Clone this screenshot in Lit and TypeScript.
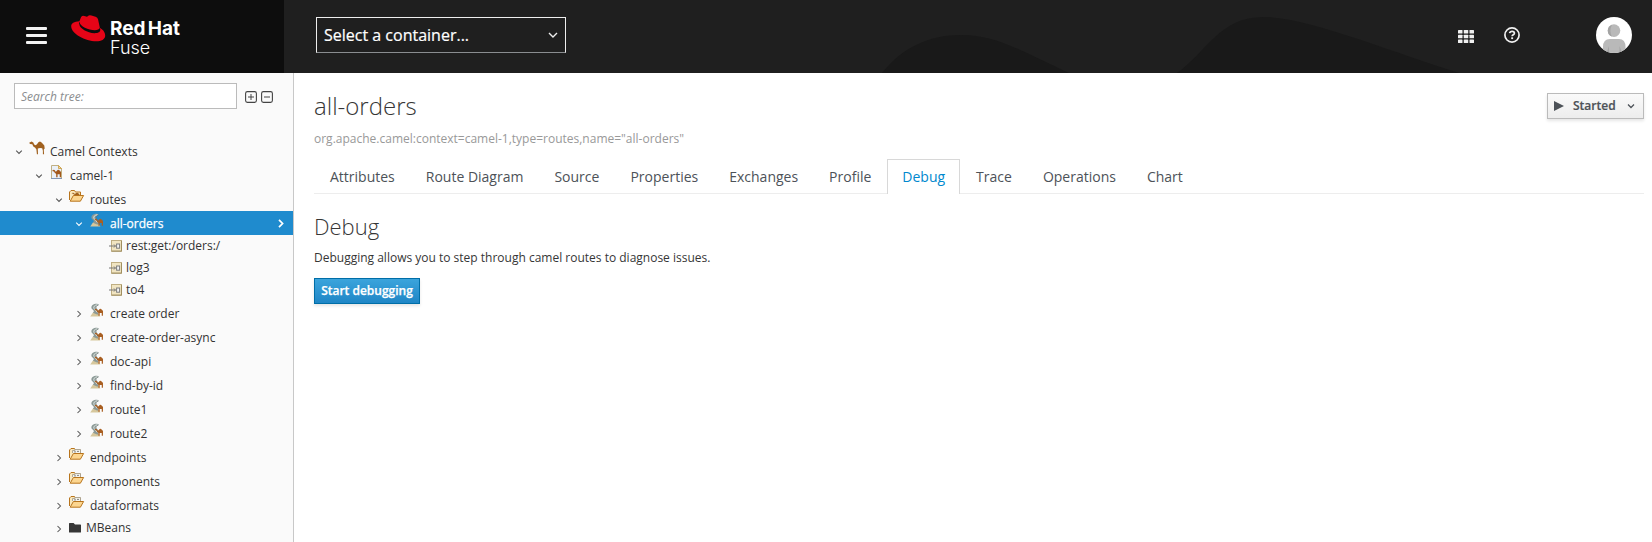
import { LitElement, html, css, svg } from "lit";
import { customElement, property } from "lit/decorators.js";

type IconName = "camel" | "context" | "folder" | "files" | "route" | "node" | "dir";

interface TreeItem {
  label: string;
  level: number;
  icon: IconName;
  state: "open" | "closed" | "leaf";
  selected?: boolean;
}

const TREE: TreeItem[] = [
  { label: "Camel Contexts", level: 0, icon: "camel", state: "open" },
  { label: "camel-1", level: 1, icon: "context", state: "open" },
  { label: "routes", level: 2, icon: "folder", state: "open" },
  { label: "all-orders", level: 3, icon: "route", state: "open", selected: true },
  { label: "rest:get:/orders:/", level: 4, icon: "node", state: "leaf" },
  { label: "log3", level: 4, icon: "node", state: "leaf" },
  { label: "to4", level: 4, icon: "node", state: "leaf" },
  { label: "create order", level: 3, icon: "route", state: "closed" },
  { label: "create-order-async", level: 3, icon: "route", state: "closed" },
  { label: "doc-api", level: 3, icon: "route", state: "closed" },
  { label: "find-by-id", level: 3, icon: "route", state: "closed" },
  { label: "route1", level: 3, icon: "route", state: "closed" },
  { label: "route2", level: 3, icon: "route", state: "closed" },
  { label: "endpoints", level: 2, icon: "files", state: "closed" },
  { label: "components", level: 2, icon: "files", state: "closed" },
  { label: "dataformats", level: 2, icon: "files", state: "closed" },
  { label: "MBeans", level: 2, icon: "dir", state: "closed" },
];

const TABS = ["Attributes", "Route Diagram", "Source", "Properties", "Exchanges", "Profile", "Debug", "Trace", "Operations", "Chart"];

const camelShape = svg`<path d="M.2 1.7 2.6 .6 4.3 1.5 5.2 3.6 6.6 4.2 8 3.2 9.4 1.2 11 .5 12.6 1.4 14 3 15.3 4.6 15.8 8.2 15 7.6 14.8 9.6 15.1 13.2H13.9L13.9 9.8 13.2 7.2 11 7 8.8 7.4 9 13.2H7.9L7.4 8.4 6.2 6.8 4.3 5.4 3.3 3.2 1 3Z"/>`;
const camelMini = svg`<path d="M.2 1.6 3 .6 4.6 1.6 5.6 3.8 7 3.8 9.4 1.2 11.4 .8 14 3 15.6 5 15.4 13.6H13.2V8.4H9.4V13.6H7V8.2L4.4 6 3.2 3.6 .8 3.4Z"/>`;

const ICONS: Record<IconName, unknown> = {
  camel: svg`<g fill="#a0611f">${camelShape}</g>`,
  context: svg`
    <path d="M2.5 .5H9.5L12.5 3.5V13.5H2.5Z" fill="#eaf0f8" stroke="#c0b084"/>
    <path d="M9.5 .5V3.5H12.5Z" fill="#f5dca0" stroke="#c99b3c" stroke-width=".8"/>
    <path d="M2 13.5H13" stroke="#8496b4"/>
    <g fill="#a3571a" transform="translate(3.2 4.4) scale(.57)">${camelMini}</g>`,
  folder: svg`
    <path d="M.5 11V3L2 1.5H5.5L6.5 3H11.5V6" fill="#fbe9bd" stroke="#b8741c"/>
    <g fill="#a0611f" transform="translate(2.6 3.6) scale(.5 .3)">${camelMini}</g>
    <path d="M1.2 12.2 4.4 6.5H14.6L11.4 12.2Z" fill="#fcd690" stroke="#b8741c" stroke-linejoin="round"/>`,
  files: svg`
    <path d="M.5 11V3L2 1.5H5.5L6.5 3H11.5V6" fill="#fbe9bd" stroke="#b8741c"/>
    <path d="M3.5 6V3.5H6V2.5H11.5V6" fill="#f3f3ec" stroke="#a9a290" stroke-width=".9"/>
    <path d="M5 4.9H7M8 4.4H10" stroke="#777" stroke-width=".9"/>
    <path d="M1.2 12.2 4.4 6.5H14.6L11.4 12.2Z" fill="#fcd690" stroke="#b8741c" stroke-linejoin="round"/>`,
  route: svg`
    <path d="M1.2 13.6 4 9.6 6 8.6 9 10 11.4 13.6Z" fill="#d6c79c"/>
    <path d="M8.6 .9C4.6 .6 1.6 2.8 2.6 5.4L5 8 4 9.8 8.6 11.8 9.8 9.6 7 5.8C6 4 7 2.8 9.8 1.8Z" fill="#8b9996"/>
    <path d="M8.4 1.7C5.6 2.2 4.2 3.6 5 5.4L8.2 9.4" fill="none" stroke="#dfe5e1" stroke-width="1"/>
    <path d="M9.6 1.9C7.4 2.8 6.4 4.2 7.4 5.8L9.2 8" fill="none" stroke="#65716f" stroke-width=".7"/>
    <g fill="#a95f22" transform="translate(5.6 5.4) scale(.54)">${camelMini}</g>`,
  node: svg`
    <rect x="2.5" y="2.5" width="10" height="10.6" fill="#f1e5c2" stroke="#bfae82"/>
    <path d="M2.5 13.2H12.5V3" fill="none" stroke="#a08f60"/>
    <path d="M0 8H6.4M5 6.5 6.5 8 5 9.5" fill="none" stroke="#767676"/>
    <rect x="7.6" y="6" width="3" height="4.2" fill="#f3f3f3" stroke="#7e7e7e"/>`,
  dir: svg`<path d="M0 3.6Q0 3 .6 3H4.6L6 4.6H11.4Q12 4.6 12 5.2V11.9Q12 12.5 11.4 12.5H.6Q0 12.5 0 11.9Z" fill="#363636"/>`,
};

const chevron = (open: boolean) => html`<svg width="8" height="8" viewBox="0 0 8 8">
  <path d=${open ? "M1.2 2.6 4 5.4 6.8 2.6" : "M2.5 1 5.5 4 2.5 7"} fill="none" stroke="currentColor" stroke-width="1.05"/></svg>`;

@customElement("fuse-header")
class FuseHeader extends LitElement {
  static styles = css`
    :host { display: flex; height: 73px; background: #1f1f1f; position: relative; color: #fff; }
    .brand { width: 284px; box-sizing: border-box; background: #0d0d0d; display: flex; padding-left: 26px; position: relative; }
    .burger { display: flex; flex-direction: column; gap: 4px; padding-top: 27px; width: 45px; }
    .burger i { width: 21px; height: 3px; border-radius: 1px; background: #f2f2f2; }
    .hat { margin-top: 14px; }
    .name { font-family: "Inter", sans-serif; margin: 19px 0 0 4px; display: flex; flex-direction: column; }
    .red { font-size: 19px; line-height: 19px; font-weight: 700; letter-spacing: 0; word-spacing: -2.2px; white-space: nowrap; }
    .fuse { font-size: 18px; line-height: 19px; font-weight: 300; }
    .waves { position: absolute; left: 850px; top: 0; }
    .select { position: relative; box-sizing: border-box; margin: 17px 0 0 32px; width: 250px; height: 36px; border: 1px solid #ededed; border-bottom-color: #8a8d90; display: flex; align-items: center; justify-content: space-between; padding: 0 7px 0 7px; font-size: 16px; line-height: 24px; -webkit-text-stroke: .2px #fff; }
    .tools { position: relative; margin-left: auto; display: flex; align-items: flex-start; padding-right: 20px; }
    .grid { margin: 30px 30px 0 0; }
    .help { margin: 27px 76px 0 0; }
    .avatar { margin-top: 17px; }
  `;
  render() {
    return html`
      <svg class="waves" width="640" height="73" viewBox="0 0 640 73" fill="#191919">
        <path d="M32 73C52 48 78 35 111 35C148 35 175 53 219 73Z"/>
        <path d="M327 73C357 52 369 17 414 17C458 17 550 55 609 73Z"/>
      </svg>
      <div class="brand">
        <div class="burger"><i></i><i></i><i></i></div>
        <svg class="hat" width="35" height="29" viewBox="0 0 35 29">
          <path d="M8.4 7.2 9.9 3.4Q10.7 1 13.3 1.9L16 2.8 17.7 1.6Q18.6 1 20.4 1.5L24.6 2.7Q26.6 3.3 27.1 5.4L28.9 14C31.5 15.2 34.2 18 34.2 21.4 34.2 25.4 30.2 27.3 25.3 27.3 14.2 27.3.2 19.8.2 12.3.2 9.2 3 7.4 8.4 7.2Z" fill="#e60417"/>
          <path d="M8.4 10.6C8.7 14.3 16.2 19.2 23.6 19.2 27 19.2 29.3 18.2 29.3 15.8L28.8 13.8C28.5 15.5 26.4 16.2 23.8 16.2 17.5 16.2 8.7 12.4 8.4 7.8L7.9 9.1Z" fill="#0d0d0d"/>
        </svg>
        <div class="name"><span class="red">Red Hat</span><span class="fuse">Fuse</span></div>
      </div>
      <div class="select"><span>Select a container...</span>
        <svg width="10" height="8" viewBox="0 0 10 8"><path d="M1 2 5 6 9 2" fill="none" stroke="#ededed" stroke-width="1.4"/></svg>
      </div>
      <div class="tools">
        <svg class="grid" width="16" height="14" viewBox="0 0 16 14" fill="#f0f0f0">
          ${[0, 4.7, 9.4].map((y) => [0, 5.75, 11.5].map((x) => svg`<rect x=${x} y=${y} width="4.5" height="3.6" rx=".6"/>`))}
        </svg>
        <svg class="help" width="16" height="16" viewBox="0 0 16 16" fill="none" stroke="#f0f0f0">
          <circle cx="8" cy="8" r="7.1" stroke-width="1.7"/>
          <path d="M5.6 6.2C5.9 4.7 7 4.3 8.1 4.3 9.4 4.3 10.4 5.1 10.4 6.2 10.4 7.8 8.1 7.7 8.1 9.3" stroke-width="1.7"/>
          <path d="M7.2 11.2H9.1" stroke-width="1.8"/>
        </svg>
        <svg class="avatar" width="36" height="36" viewBox="0 0 36 36">
          <clipPath id="round"><circle cx="18" cy="18" r="18"/></clipPath>
          <g clip-path="url(#round)">
            <rect width="36" height="36" fill="#fff"/>
            <path d="M7 36V30Q7 22 14 22H23Q29.5 22 29.5 30V36Z" fill="#b9b9b9"/>
            <path d="M10.5 36 13 29V36ZM26 36 23.5 29V36Z" fill="#a3a3a3"/>
            <circle cx="18" cy="13.6" r="6.3" fill="#b9b9b9"/>
            <path d="M16 7.7A6.3 6.3 0 0 0 16 19.6Q12.8 14 16 7.7Z" fill="#a3a3a3"/>
          </g>
        </svg>
      </div>`;
  }
}

@customElement("jmx-tree")
class JmxTree extends LitElement {
  static styles = css`
    :host { display: block; box-sizing: border-box; width: 294px; border-right: 1px solid #c8c8c8; background: #fafafa; color: #333; overflow: hidden; }
    .search { display: flex; align-items: center; padding: 10px 0 0 14px; }
    .input { box-sizing: border-box; width: 223px; height: 26px; border: 1px solid #bbb; background: #fff; padding: 0 6px; font-style: italic; line-height: 25px; color: #8b8d8f; margin-right: 8px; }
    .box { margin-right: 4px; margin-top: 2px; }
    .tree { padding-top: 30px; }
    .row { display: flex; height: 24px; align-items: flex-start; box-sizing: border-box; white-space: nowrap; }
    .row.short { height: 22px; }
    .indent { flex: none; }
    .toggle { flex: none; width: 20px; height: 24px; display: flex; align-items: center; justify-content: center; padding-top: 2px; box-sizing: border-box; color: #555; }
    .short .toggle { height: 22px; }
    .icon { flex: none; width: 16px; height: 16px; margin: 2px 5px 0 0; }
    .short .icon { margin: 3px 1px 0 0; }
    .label { line-height: 23px; padding-top: 1px; }
    .short .label { line-height: 21px; padding-top: 0; }
    .selected { background: #1f8bce; color: #fff; }
    .selected .toggle { color: #fff; }
    .selected .label { -webkit-text-stroke: .25px #fff; }
    .arrow { margin: 8px 8px 0 auto; }
  `;
  render() {
    return html`
      <div class="search">
        <div class="input">Search tree:</div>
        ${["M3 6H9M6 3V9", "M3 6H9"].map((d) => html`<svg class="box" width="12" height="12" viewBox="0 0 12 12" fill="none" stroke="#444">
          <rect x=".6" y=".6" width="10.8" height="10.8" rx="1.8" stroke-width="1.1"/><path d=${d}/></svg>`)}
      </div>
      <div class="tree">
        ${TREE.map((n) => html`<div class="row ${n.icon === "node" || n.icon === "dir" ? "short" : ""} ${n.selected ? "selected" : ""}">
          <span class="indent" style="width:${9 + n.level * 20}px"></span>
          <span class="toggle">${n.state === "leaf" ? "" : chevron(n.state === "open")}</span>
          <svg class="icon" viewBox="0 0 16 16">${ICONS[n.icon]}</svg>
          <span class="label">${n.label}</span>
          ${n.selected ? html`<svg class="arrow" width="8" height="9" viewBox="0 0 8 9"><path d="M2 .8 5.6 4.5 2 8.2" fill="none" stroke="#fff" stroke-width="1.7"/></svg>` : ""}
        </div>`)}
      </div>`;
  }
}

@customElement("route-view")
class RouteView extends LitElement {
  @property() active = "Debug";
  static styles = css`
    :host { display: block; flex: 1; min-width: 0; padding: 20px 8px 0 20px; color: #363636; }
    .top { display: flex; justify-content: space-between; align-items: flex-start; height: 38px; }
    h1 { margin: 0; font-weight: 300; font-size: 24px; line-height: 26px; }
    .state { box-sizing: border-box; width: 97px; height: 26px; border: 1px solid #bbb; background: linear-gradient(#fafafa, #ededed); box-shadow: 0 2px 3px rgba(3,3,3,.1); display: flex; align-items: center; font-weight: 600; color: #4d5258; padding: 0 8px 0 6px; -webkit-text-stroke: .2px #4d5258; }
    .state svg:first-child { margin-right: 9px; }
    .state svg:last-child { margin-left: auto; }
    .oid { font-size: 12px; line-height: 16px; color: #999; }
    .tabs { display: flex; height: 35px; margin-top: 12px; border-bottom: 1px solid #ededed; box-sizing: border-box; font-size: 14px; line-height: 33px; color: #4d5258; }
    .tab { padding: 0 15px; margin-left: 1px; border: 1px solid transparent; border-width: 1px 0 0; }
    .tab.active { color: #0088ce; background: #fff; border: 1px solid #d8d8d8; border-bottom: 0; padding: 0 14px; margin-bottom: -1px; }
    h2 { margin: 18px 0 0; font-weight: 300; font-size: 22px; line-height: 28px; }
    p { margin: 10px 0 12px; line-height: 16px; }
    .go { display: flex; box-sizing: border-box; height: 26px; width: 106px; justify-content: center; align-items: center; border: 1px solid #006ea7; color: #fff; font-weight: 600; -webkit-text-stroke: .25px #fff; background: linear-gradient(#3ba4dc, #1f86c6); box-shadow: 0 2px 3px rgba(3,3,3,.1); }
  `;
  render() {
    return html`
      <div class="top">
        <h1>all-orders</h1>
        <div class="state">
          <svg width="10" height="10" viewBox="0 0 10 10"><path d="M0 0 10 5 0 10Z" fill="#4d5258"/></svg>
          <span>Started</span>
          <svg width="8" height="8" viewBox="0 0 8 8"><path d="M1 2.5 4 5.5 7 2.5" fill="none" stroke="#4d5258" stroke-width="1.3"/></svg>
        </div>
      </div>
      <div class="oid">org.apache.camel:context=camel-1,type=routes,name="all-orders"</div>
      <div class="tabs">${TABS.map((t) => html`<div class="tab ${t === this.active ? "active" : ""}">${t}</div>`)}</div>
      <h2>Debug</h2>
      <p>Debugging allows you to step through camel routes to diagnose issues.</p>
      <div class="go">Start debugging</div>`;
  }
}

@customElement("app-root")
class AppRoot extends LitElement {
  static styles = css`
    :host { display: flex; flex-direction: column; height: 100vh; overflow: hidden; background: #fff; font: 12px/20px "Open Sans", "Noto Sans", sans-serif; }
    .body { flex: 1; min-height: 0; display: flex; }
  `;
  render() {
    return html`<fuse-header></fuse-header><div class="body"><jmx-tree></jmx-tree><route-view></route-view></div>`;
  }
}
